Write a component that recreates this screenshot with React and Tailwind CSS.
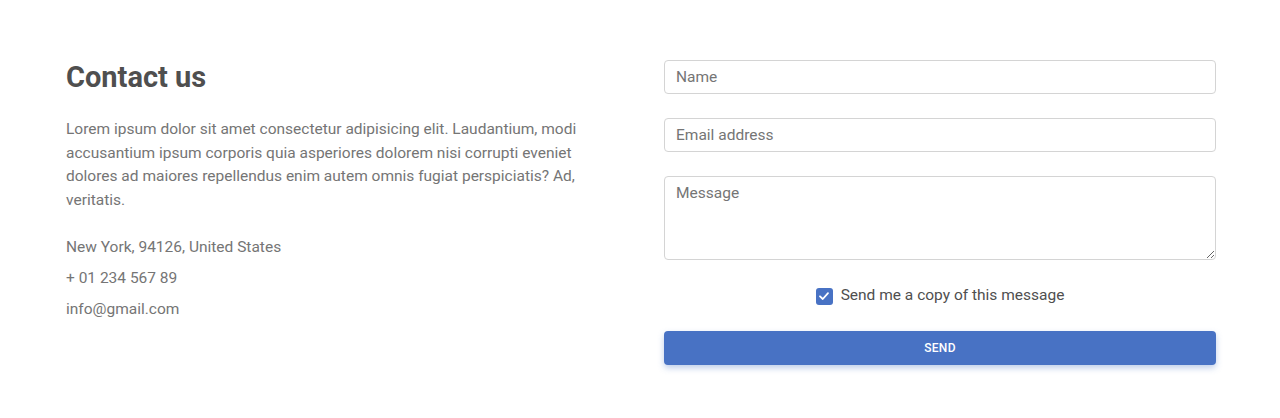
export default function App() {
  return (
    <div className="w-[1280px] h-[418px] bg-white" style={{ fontFamily: 'Roboto, "Noto Sans", sans-serif' }}>
      <div className="pt-[60px] pl-[66px] flex gap-[58px]">
        <div className="w-[540px]">
          <h2 className="text-[29px] leading-[34px] font-bold text-[#4f4f4f]">Contact us</h2>
          <p className="mt-[24px] text-[15.5px] leading-[23.5px] text-[#757575]">
            Lorem ipsum dolor sit amet consectetur adipisicing elit. Laudantium, modi accusantium ipsum corporis quia asperiores dolorem nisi corrupti eveniet dolores ad maiores repellendus enim autem omnis fugiat perspiciatis? Ad, veritatis.
          </p>
          <div className="mt-[24px] flex flex-col gap-[7.5px] text-[15.5px] leading-[23.5px] text-[#757575]">
            <p>New York, 94126, United States</p>
            <p>+ 01 234 567 89</p>
            <p>info@gmail.com</p>
          </div>
        </div>
        <div className="w-[552px] flex flex-col">
          <input
            type="text"
            placeholder="Name"
            className="h-[34px] w-full rounded-[4px] border border-[#d4d4d4] px-[11px] text-[15.5px] text-[#4f4f4f] placeholder:text-[#757575] outline-none"
          />
          <input
            type="email"
            placeholder="Email address"
            className="mt-[24px] h-[34px] w-full rounded-[4px] border border-[#d4d4d4] px-[11px] text-[15.5px] text-[#4f4f4f] placeholder:text-[#757575] outline-none"
          />
          <textarea
            placeholder="Message"
            className="mt-[24px] h-[84px] w-full rounded-[4px] border border-[#d4d4d4] px-[11px] py-[5px] text-[15.5px] leading-[23.5px] text-[#4f4f4f] placeholder:text-[#757575] outline-none resize-y"
          />
          <label className="mt-[24px] h-[24px] flex items-center justify-center gap-[8px] text-[15.5px] text-[#4f4f4f]">
            <span className="w-[17px] h-[17px] rounded-[3px] bg-[#4872c4] flex items-center justify-center">
              <svg width="12" height="12" viewBox="0 0 12 12" fill="none">
                <path d="M2 6.3 L4.8 9 L10 3.2" stroke="white" strokeWidth="1.8" strokeLinecap="round" strokeLinejoin="round" />
              </svg>
            </span>
            <span>Send me a copy of this message</span>
          </label>
          <button className="mt-[23px] h-[34px] w-full rounded-[4px] bg-[#4872c4] text-white text-[12px] font-medium tracking-[0.3px] shadow-[0_3px_6px_0_rgba(72,114,196,0.35)]">
            SEND
          </button>
        </div>
      </div>
    </div>
  );
}
